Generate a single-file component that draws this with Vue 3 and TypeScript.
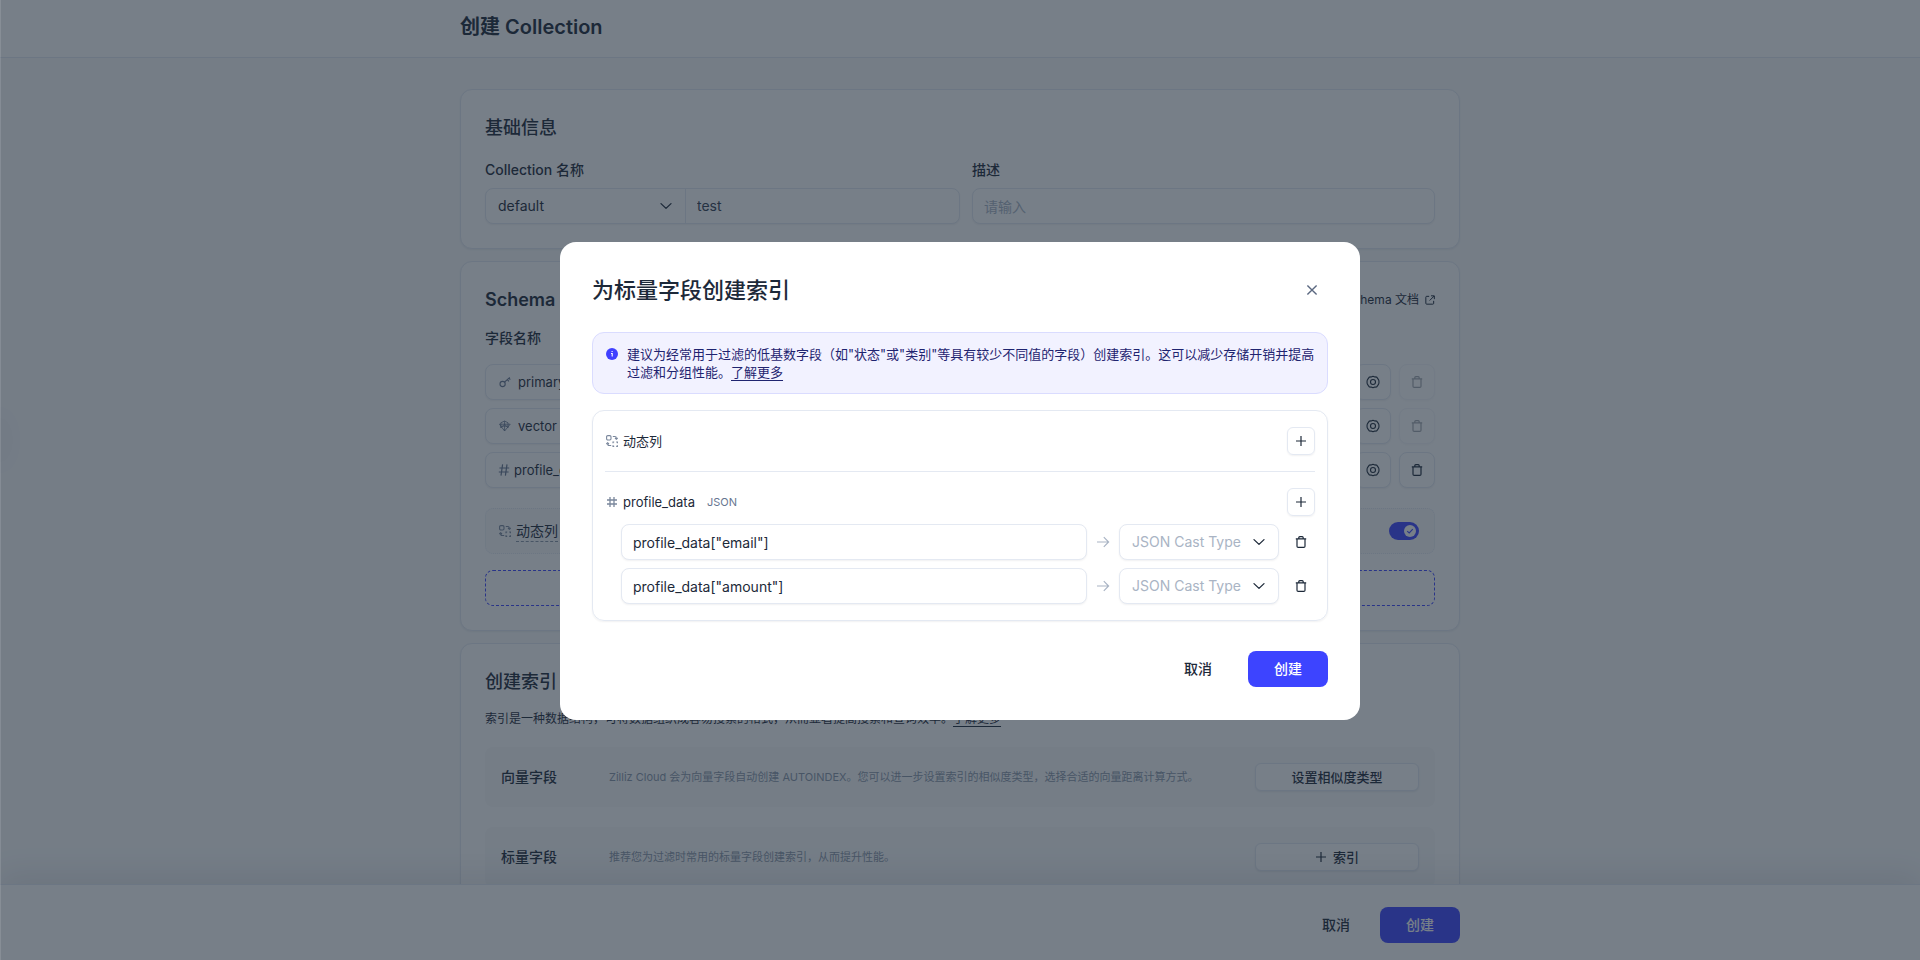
<script setup lang="ts">
import { ref } from 'vue'

interface SchemaField {
  id: string
  name: string
  icon: 'key' | 'vector' | 'hash'
  removable: boolean
}

interface JsonPath {
  path: string
  castType: string
}

const database = ref('default')
const collectionName = ref('test')
const description = ref('')
const dynamicEnabled = ref(true)

const fields = ref<SchemaField[]>([
  { id: 'f1', name: 'primary_key', icon: 'key', removable: false },
  { id: 'f2', name: 'vector', icon: 'vector', removable: false },
  { id: 'f3', name: 'profile_data', icon: 'hash', removable: true },
])

const paths = ref<JsonPath[]>([
  { path: 'profile_data["email"]', castType: '' },
  { path: 'profile_data["amount"]', castType: '' },
])

const castTypes = ['BOOL', 'DOUBLE', 'VARCHAR']

function addPath(): void {
  paths.value.push({ path: 'profile_data[""]', castType: '' })
}

function removePath(index: number): void {
  paths.value.splice(index, 1)
}
</script>

<template>
  <div class="page">
    <svg class="sprite" aria-hidden="true">
      <symbol id="i-chevron" viewBox="0 0 12 12">
        <path d="M1 3.6 6 8.400l5-4.800" fill="none" stroke="currentColor" stroke-width="1.300" stroke-linecap="round" stroke-linejoin="round" />
      </symbol>
      <symbol id="i-plus" viewBox="0 0 12 12">
        <path d="M6 1v10M1 6h10" fill="none" stroke="currentColor" stroke-width="1.200" />
      </symbol>
      <symbol id="i-trash" viewBox="0 0 12 12">
        <path d="M.8 2.800h10.400M2 2.800v7.400q0 1.200 1.200 1.200h5.600q1.200 0 1.200-1.200V2.800M3.800 2.800V1.700q0-1 1-1h2.400q1 0 1 1v1.100" fill="none" stroke="currentColor" stroke-width="1.200" />
      </symbol>
      <symbol id="i-gear" viewBox="0 0 14 14">
        <path d="M7 1.200 8.800 1.900l1.900.2 1.100 1.500 1 1.600L13 7l-.2 1.800-1 1.600-1.100 1.500-1.900.2L7 12.800l-1.800-.7-1.900-.2-1.100-1.500-1-1.600L1 7l.2-1.800 1-1.600 1.100-1.500 1.900-.2z" fill="none" stroke="currentColor" stroke-width="1.100" stroke-linejoin="round" />
        <circle cx="7" cy="7" r="2.500" fill="none" stroke="currentColor" stroke-width="1.100" />
      </symbol>
      <symbol id="i-key" viewBox="0 0 12 12">
        <circle cx="3.600" cy="8" r="2.600" fill="none" stroke="currentColor" stroke-width="1.100" />
        <path d="M5.500 6.200 10.800 1.500M8.400 3.600l1.500 1.800M10 2.200l1.300 1.500" fill="none" stroke="currentColor" stroke-width="1.100" />
      </symbol>
      <symbol id="i-vector" viewBox="0 0 12 12">
        <path d="M5.600 1v10M.4 4.200h10.800M.4 4.200l5.200 6.800 5.600-6.800M1.800 2.800 5.600 1l3.400 1.800M1.800 8l3.800-3.800L9 8M1.800 2.800v5.200M9 2.800v5.200M1.800 6.200h7.800" fill="none" stroke="currentColor" stroke-width=".8" />
      </symbol>
      <symbol id="i-hash" viewBox="0 0 12 12">
        <path d="M4.600 .400 3 11.600M9 .400 7.400 11.600M1.400 4h9.800M.8 8h9.800" fill="none" stroke="currentColor" stroke-width="1.200" />
      </symbol>
      <symbol id="i-grid" viewBox="0 0 12 12">
        <path d="M4 1v10M8 1v10M1 4h10M1 8h10" fill="none" stroke="currentColor" stroke-width="1.300" />
      </symbol>
      <symbol id="i-dynamic" viewBox="0 0 12 12">
        <rect x=".6" y=".6" width="4.400" height="4.400" rx="1.200" fill="none" stroke="currentColor" stroke-width="1.100" />
        <path d="M7 8.200V7h1.200M10.200 7h1.200v1.200M11.400 10.200v1.200h-1.200M8.200 11.400H7v-1.200" fill="none" stroke="currentColor" stroke-width="1.100" />
        <path d="M6.800 1.500h2q1.600 0 1.600 1.800M9 3l1.400 1.300L11.800 3M5.200 10.500h-2q-1.600 0-1.600-1.800M.2 9l1.400-1.300L3 9" fill="none" stroke="currentColor" stroke-width="1.100" />
      </symbol>
      <symbol id="i-external" viewBox="0 0 12 12">
        <path d="M5 1.600H2q-1 0-1 1V10q0 1 1 1h7.400q1 0 1-1V7M7.200 1h4v4M11 1.200 5.600 6.600" fill="none" stroke="currentColor" stroke-width="1.200" />
      </symbol>
      <symbol id="i-arrow" viewBox="0 0 14 12">
        <path d="M1 6h11.600M7.800 1.200 12.600 6 7.800 10.800" fill="none" stroke="currentColor" stroke-width="1.200" />
      </symbol>
      <symbol id="i-close" viewBox="0 0 12 12">
        <path d="m1.400 1.400 9.200 9.200M10.600 1.400l-9.200 9.200" fill="none" stroke="currentColor" stroke-width="1.400" />
      </symbol>
      <symbol id="i-info" viewBox="0 0 12 12">
        <circle cx="6" cy="6" r="6" fill="#4040ff" />
        <path d="M5 5.500h1.200v3M6.100 3v1.100" fill="none" stroke="#fff" stroke-width="1.100" />
      </symbol>
    </svg>

    <header class="page-header">
      <h1 class="container">创建 Collection</h1>
    </header>

    <main class="page-main">
      <div class="container stack">
        <section class="card">
          <h2>基础信息</h2>
          <div class="basic-grid">
            <div>
              <label class="label" for="collection-name">Collection 名称</label>
              <div class="joined">
                <div class="select-wrap">
                  <select v-model="database" aria-label="数据库">
                    <option>default</option>
                  </select>
                  <svg class="icon chevron"><use href="#i-chevron" /></svg>
                </div>
                <input id="collection-name" v-model="collectionName" type="text" />
              </div>
            </div>
            <div class="basic-right">
              <label class="label" for="description">描述</label>
              <input id="description" v-model="description" class="field" type="text" placeholder="请输入" />
            </div>
          </div>
        </section>

        <section class="card">
          <div class="card-head">
            <h2 class="latin">Schema</h2>
            <a class="doc-link" href="#">
              Schema 文档
              <svg class="icon"><use href="#i-external" /></svg>
            </a>
          </div>
          <div class="label schema-label">字段名称</div>
          <div class="schema-rows">
            <div v-for="f in fields" :key="f.id" class="schema-row">
              <div class="name-box" :class="{ tight: f.icon === 'hash' }">
                <svg class="icon"><use :href="'#i-' + f.icon" /></svg>
                <input v-model="f.name" type="text" aria-label="字段名称" />
              </div>
              <button class="square" type="button" aria-label="设置">
                <svg class="icon gear"><use href="#i-gear" /></svg>
              </button>
              <button class="square" type="button" aria-label="删除" :disabled="!f.removable">
                <svg class="icon"><use href="#i-trash" /></svg>
              </button>
            </div>
          </div>
          <div class="dynamic-box">
            <svg class="icon muted"><use href="#i-dynamic" /></svg>
            <label for="dynamic-toggle">动态列</label>
            <span class="toggle">
              <input id="dynamic-toggle" v-model="dynamicEnabled" type="checkbox" role="switch" />
              <svg class="toggle-knob" viewBox="0 0 12 12">
                <circle cx="6" cy="6" r="6" fill="#fff" />
                <path d="M3.200 6.200 5.200 8l3.600-3.800" fill="none" stroke="#3d44ff" stroke-width="1.100" />
              </svg>
            </span>
          </div>
          <button class="add-field" type="button" aria-label="添加字段"></button>
        </section>

        <section class="card">
          <h2>创建索引</h2>
          <p class="index-desc">索引是一种数据结构，可将数据组织成容易搜索的格式，从而显著提高搜索和查询效率。<a href="#">了解更多</a></p>
          <div class="index-rows">
            <div class="index-row">
              <h3>向量字段</h3>
              <p>Zilliz Cloud 会为向量字段自动创建 AUTOINDEX。您可以进一步设置索引的相似度类型，选择合适的向量距离计算方式。</p>
              <button class="small-btn" type="button">设置相似度类型</button>
            </div>
            <div class="index-row">
              <h3>标量字段</h3>
              <p>推荐您为过滤时常用的标量字段创建索引，从而提升性能。</p>
              <button class="small-btn" type="button">
                <svg class="icon"><use href="#i-plus" /></svg>
                索引
              </button>
            </div>
          </div>
        </section>
      </div>
    </main>

    <footer class="page-footer">
      <div class="container footer-actions">
        <button class="btn ghost" type="button">取消</button>
        <button class="btn primary" type="button">创建</button>
      </div>
    </footer>

    <span class="drawer-handle" aria-hidden="true"></span>

    <div class="overlay">
      <div class="modal" role="dialog" aria-modal="true" aria-labelledby="modal-title">
        <div class="modal-head">
          <h2 id="modal-title">为标量字段创建索引</h2>
          <button class="close" type="button" aria-label="关闭">
            <svg class="icon"><use href="#i-close" /></svg>
          </button>
        </div>

        <div class="alert">
          <svg class="icon"><use href="#i-info" /></svg>
          <p>建议为经常用于过滤的低基数字段（如"状态"或"类别"等具有较少不同值的字段）创建索引。这可以减少存储开销并提高过滤和分组性能。<a href="#">了解更多</a></p>
        </div>

        <div class="panel">
          <div class="panel-section">
            <div class="panel-head">
              <svg class="icon muted"><use href="#i-dynamic" /></svg>
              <span>动态列</span>
              <button class="plus" type="button" aria-label="添加动态列索引">
                <svg class="icon"><use href="#i-plus" /></svg>
              </button>
            </div>
          </div>
          <div class="panel-section">
            <div class="panel-head">
              <svg class="icon muted"><use href="#i-grid" /></svg>
              <span>profile_data</span>
              <small>JSON</small>
              <button class="plus" type="button" aria-label="添加 JSON 路径" @click="addPath">
                <svg class="icon"><use href="#i-plus" /></svg>
              </button>
            </div>
            <div v-for="(p, i) in paths" :key="i" class="path-row">
              <input v-model="p.path" class="field" type="text" aria-label="JSON 路径" />
              <span class="arrow"><svg class="icon"><use href="#i-arrow" /></svg></span>
              <div class="select-wrap boxed">
                <select v-model="p.castType" :class="{ empty: !p.castType }" aria-label="JSON Cast Type">
                  <option value="" disabled>JSON Cast Type</option>
                  <option v-for="t in castTypes" :key="t" :value="t">{{ t }}</option>
                </select>
                <svg class="icon chevron"><use href="#i-chevron" /></svg>
              </div>
              <button class="remove" type="button" aria-label="删除" @click="removePath(i)">
                <svg class="icon"><use href="#i-trash" /></svg>
              </button>
            </div>
          </div>
        </div>

        <div class="modal-actions">
          <button class="btn ghost" type="button">取消</button>
          <button class="btn primary" type="button">创建</button>
        </div>
      </div>
    </div>
  </div>
</template>

<style>
body {
  margin: 0;
  overflow: hidden;
}
</style>

<style scoped>
.page,
.page * {
  box-sizing: border-box;
}

.page {
  --ink: #1d2939;
  --line: #e4e9f2;
  --muted: #667590;
  --faint: #a9b4c4;
  --primary: #3d44ff;
  display: flex;
  flex-direction: column;
  height: 100vh;
  background: #f9fafb;
  color: var(--ink);
  font: 400 14px/20px Inter, 'Noto Sans CJK SC', sans-serif;
}

.sprite {
  position: absolute;
  width: 0;
  height: 0;
}

h1, h2, h3, p {
  margin: 0;
}

button, input, select {
  margin: 0;
  font: inherit;
  color: inherit;
}

button {
  display: flex;
  align-items: center;
  justify-content: center;
  padding: 0;
  border: 0;
  background: none;
}

input[type='text'] {
  min-width: 0;
  border: 0;
  outline: 0;
  background: none;
}

input::placeholder {
  color: var(--faint);
  opacity: 1;
}

a {
  color: inherit;
}

.icon {
  flex: none;
  display: block;
  width: 12px;
  height: 12px;
}

.muted {
  color: #7a879c;
}

.container {
  width: 100%;
  max-width: 1000px;
  margin: 0 auto;
}

.page-header {
  flex: none;
  padding: 15px 0 18px;
  border-bottom: 1px solid var(--line);
  background: #fff;
}

.page-header h1 {
  font-size: 20px;
  line-height: 24px;
  font-weight: 600;
}

.page-main {
  flex: 1;
  min-height: 0;
  overflow: hidden;
  padding-top: 31px;
}

.stack {
  display: flex;
  flex-direction: column;
  gap: 12px;
}

.card {
  padding: 24px;
  border: 1px solid var(--line);
  border-radius: 12px;
  background: #fff;
  box-shadow: 0 1px 2px rgba(16, 24, 40, 0.06);
}

.card h2 {
  font-size: 18px;
  line-height: 28px;
  font-weight: 500;
}

.card h2.latin {
  font-weight: 600;
}

.label {
  display: block;
  line-height: 24px;
  font-weight: 500;
}

.basic-grid {
  display: grid;
  grid-template-columns: 1fr 1fr;
  margin-top: 16px;
}

.basic-grid .label {
  margin-bottom: 6px;
}

.basic-right {
  padding-left: 12px;
}

.joined,
.field,
.boxed,
.name-box,
.square {
  border: 1px solid var(--line);
  border-radius: 8px;
  background: #fff;
  box-shadow: 0 1px 2px rgba(16, 24, 40, 0.06);
}

input.field[type='text'] {
  width: 100%;
  height: 36px;
  padding: 0 11px;
  border: 1px solid var(--line);
  background: #fff;
}

.joined {
  display: flex;
  height: 36px;
}

.joined input {
  flex: 1;
  padding: 0 11px;
  color: #344054;
}

.select-wrap {
  position: relative;
}

.joined .select-wrap {
  width: 200px;
  border-right: 1px solid var(--line);
}

.select-wrap select {
  width: 100%;
  height: 34px;
  padding: 0 32px 0 12px;
  border: 0;
  outline: 0;
  appearance: none;
  background: none;
}

.chevron {
  position: absolute;
  top: 11px;
  right: 13px;
  pointer-events: none;
}

.card-head {
  display: flex;
  align-items: center;
  justify-content: space-between;
}

.doc-link {
  display: flex;
  align-items: center;
  gap: 6px;
  font-size: 12px;
  text-decoration: none;
}

.doc-link .icon {
  width: 10px;
  height: 10px;
}

.schema-label {
  margin: 12px 0 14px;
}

.schema-rows {
  display: flex;
  flex-direction: column;
  gap: 8px;
}

.schema-row {
  display: flex;
  gap: 8px;
  height: 36px;
}

.name-box {
  flex: 1;
  display: flex;
  align-items: center;
  gap: 7px;
  padding: 0 13px;
  font-size: 13px;
}

.name-box .icon {
  color: var(--muted);
}

.name-box.tight {
  gap: 4px;
  padding-left: 12px;
}

.name-box input {
  flex: 1;
  padding: 0;
}

.square {
  width: 36px;
  height: 36px;
}

.square:disabled {
  opacity: 0.4;
}

.gear {
  width: 14px;
  height: 14px;
}

.dynamic-box {
  display: flex;
  align-items: center;
  height: 46px;
  margin: 20px 0 16px;
  padding: 0 15px 0 13px;
  border: 1px dotted var(--line);
  border-radius: 8px;
  background: #f9fafb;
}

.dynamic-box label {
  margin-left: 5px;
  border-bottom: 1px dashed #8a96a8;
}

.toggle {
  position: relative;
  display: flex;
  margin-left: auto;
}

.toggle input {
  width: 30px;
  height: 18px;
  border-radius: 9px;
  appearance: none;
  background: #cdd5df;
}

.toggle input:checked {
  background: var(--primary);
}

.toggle-knob {
  position: absolute;
  top: 3px;
  right: 3px;
  width: 12px;
  height: 12px;
  pointer-events: none;
}

.add-field {
  width: 100%;
  height: 36px;
  border: 1px dashed var(--primary);
  border-radius: 8px;
}

.index-desc {
  margin: 12px 0 18px;
  font-size: 12px;
  line-height: 21px;
}

.index-desc a,
.alert a {
  text-underline-offset: 3px;
}

.index-rows {
  display: flex;
  flex-direction: column;
  gap: 20px;
}

.index-row {
  display: flex;
  align-items: center;
  padding: 16px;
  border-radius: 8px;
  background: #f9fafb;
}

.index-row h3 {
  width: 108px;
  font-size: 14px;
  font-weight: 500;
}

.index-row p {
  flex: 1;
  color: #8b97a9;
  font-size: 11px;
}

.small-btn {
  gap: 6px;
  width: 164px;
  height: 28px;
  border: 1px solid var(--line);
  border-radius: 6px;
  background: #fff;
  box-shadow: 0 1px 2px rgba(16, 24, 40, 0.08);
  font-size: 13px;
  font-weight: 500;
}

.page-footer {
  flex: none;
  position: relative;
  padding: 22px 0 17px;
  border-top: 1px solid var(--line);
  background: #fff;
  box-shadow: 0 -8px 32px rgba(16, 24, 40, 0.1);
}

.footer-actions,
.modal-actions {
  display: flex;
  justify-content: flex-end;
}

.footer-actions {
  gap: 12px;
}

.btn {
  width: 80px;
  height: 36px;
  border-radius: 8px;
  font-weight: 500;
}

.btn.ghost {
  width: 64px;
}

.btn.primary {
  background: var(--primary);
  color: #fff;
}

.drawer-handle {
  position: fixed;
  top: 410px;
  left: -12px;
  width: 12px;
  height: 60px;
  border-radius: 8px;
  box-shadow: 4px 0 32px rgba(16, 24, 40, 0.1);
}

.overlay {
  position: fixed;
  inset: 0;
  display: flex;
  align-items: center;
  justify-content: center;
  padding-top: 2px;
  background: rgba(29, 41, 57, 0.6);
  box-shadow: inset 1px 0 rgba(255, 255, 255, 0.12);
}

.modal {
  width: 800px;
  max-width: 100%;
  padding: 32px 32px 33px;
  border-radius: 16px;
  background: #fff;
}

.modal-head {
  display: flex;
  align-items: center;
  justify-content: space-between;
  height: 32px;
  margin-bottom: 26px;
}

.modal-head h2 {
  font-size: 22px;
  line-height: 32px;
  font-weight: 500;
}

.close {
  width: 32px;
  height: 32px;
  color: #5b6880;
}

.alert {
  display: flex;
  gap: 9px;
  padding: 12px 12px 12px 13px;
  border: 1px solid #dadcff;
  border-radius: 12px;
  background: #f2f2ff;
  color: #1f2470;
  font-size: 13px;
  line-height: 18px;
}

.alert .icon {
  margin-top: 3px;
}

.panel {
  margin-top: 16px;
  padding: 0 12px;
  border: 1px solid var(--line);
  border-radius: 12px;
  box-shadow: 0 1px 2px rgba(16, 24, 40, 0.06);
}

.panel-section {
  padding: 16px 0;
}

.panel-section + .panel-section {
  border-top: 1px solid var(--line);
}

.panel-head {
  display: flex;
  align-items: center;
  gap: 5px;
  height: 28px;
  padding-left: 1px;
  font-size: 13px;
}

.panel-head small {
  margin-left: 7px;
  color: var(--muted);
  font-size: 11px;
}

.plus {
  width: 28px;
  height: 28px;
  margin-left: auto;
  border: 1px solid var(--line);
  border-radius: 6px;
  box-shadow: 0 1px 2px rgba(16, 24, 40, 0.06);
}

.path-row {
  display: flex;
  align-items: center;
  height: 36px;
  margin-top: 8px;
  padding-left: 16px;
}

.path-row input.field {
  flex: 1;
}

.arrow {
  display: flex;
  justify-content: center;
  width: 32px;
  color: var(--faint);
}

.arrow .icon {
  width: 14px;
}

.boxed {
  width: 160px;
}

.select-wrap .empty {
  color: var(--faint);
}

.remove {
  width: 28px;
  height: 28px;
  margin-left: 8px;
}

.modal-actions {
  gap: 18px;
  margin-top: 30px;
}
</style>
